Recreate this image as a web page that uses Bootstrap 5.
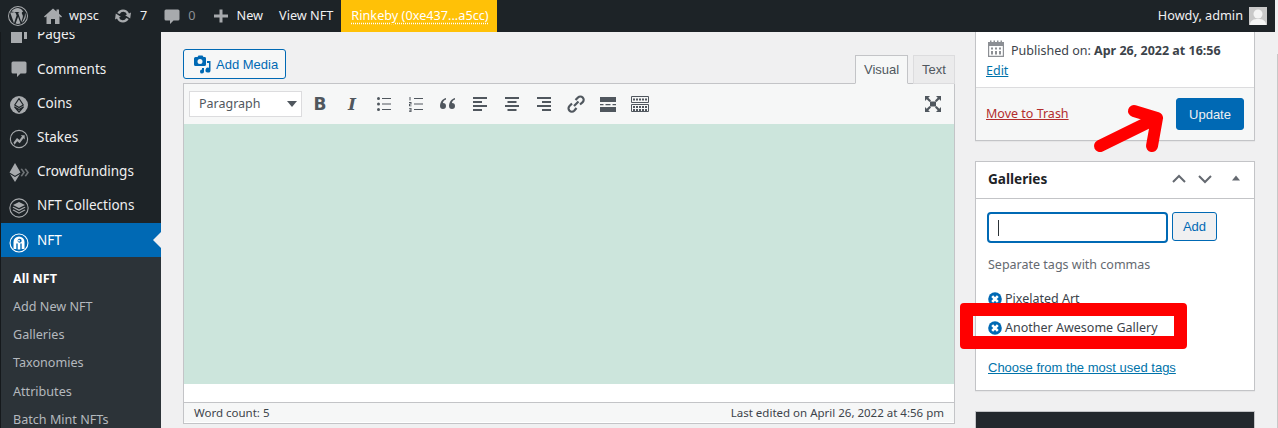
<!DOCTYPE html>
<html lang="en">
<head>
<meta charset="utf-8">
<title>Edit NFT</title>
<link href="https://cdn.jsdelivr.net/npm/bootstrap@5.3.0/dist/css/bootstrap.min.css" rel="stylesheet">
<style>
html,body{height:428px;overflow:hidden}
body{background:#f0f0f1;font-family:"Noto Sans",sans-serif;font-size:13px;color:#3c434a;position:relative}
.wp-bar{height:32px;width:1275px;background:#1d2327;color:#f0f0f1;padding:0;flex-wrap:nowrap;justify-content:flex-start;font-size:12.7px}
.wp-bar svg{display:block;fill:#a7aaad}
.bar-item{display:flex;align-items:center;height:32px;color:#f0f0f1;text-decoration:none;gap:6px;white-space:nowrap}
.bar-logo{margin-left:8px;width:20px}
.bar-home{margin-left:15px}.bar-upd{margin-left:14px;gap:7px}.bar-com{margin-left:15px}.bar-new{margin-left:17px}.bar-view{margin-left:16px}
.bar-net{margin-left:8px;width:156px;background:#ffc107;color:#fff;padding-left:10px;text-decoration:underline dotted;text-underline-offset:2px}
.bar-zero{color:#8c8f94}
.bar-howdy{margin-left:auto;margin-right:8px;gap:6px}
.bar-avatar{width:18px;height:18px;background:#c9c9c9;display:block}
.page-wrap{height:396px;overflow:hidden}
.side-menu{width:161px;border-left:1px solid #15191c;flex:none;background:#1d2327;height:396px;overflow:hidden;font-size:13.5px}
.menu-list{margin-top:-14px}
.menu-row{height:34.2px;display:flex;align-items:center;color:#f0f0f1;padding:0 0 1px;gap:0;position:relative}
.menu-row:hover{color:#f0f0f1}
.menu-ico{width:36px;display:flex;justify-content:center;flex:none}
.menu-ico svg{display:block;fill:#a7aaad}
.ico-low{margin-top:4px}
.ico-lower{margin-top:6px}
.menu-on{background:#0069b4;color:#fff}
.menu-on svg{fill:#fff}
.menu-on::after{content:"";position:absolute;right:0;top:9px;border:8px solid transparent;border-right-color:#f0f0f1;border-left:0}
.sub-list{background:#2c3338;padding:7.5px 0 0;font-size:12.6px}
.sub-row{height:28.3px;display:flex;align-items:center;padding:0 0 0 12px;color:#b4b9be}
.sub-on{color:#fff;font-weight:700}
.main-col{width:814px;flex:none;padding:17px 20px 0 22px}
.add-media{height:30px;width:103px;border:1px solid #0069b4;background:#f6f7f7;color:#0069b4;font:13px "Liberation Sans",sans-serif;padding:0 0 0 9px;display:flex;align-items:center;gap:3px;border-radius:3px}
.add-media:hover{background:#f6f7f7;color:#0069b4;border-color:#0069b4}
.head-row{height:35px;margin-bottom:-1px;align-items:flex-end}
.ed-tabs{margin-left:auto;gap:5px;align-self:flex-end}
.ed-tab{height:29px;border:1px solid #dcdcde;background:#ebebec;color:#50575e;font:13px/27px "Liberation Sans",sans-serif;padding:0 8px;width:42px;position:relative;z-index:1}
.ed-tab.tab-on{background:#f6f7f7;border-color:#c3c4c7 #c3c4c7 #f6f7f7;width:53px}
.editor-box{border:1px solid #c3c4c7;background:#fff;height:341px;width:772px;display:flex;flex-direction:column;box-sizing:border-box;border-radius:0}
.tool-row{height:40px;background:#f6f7f7;padding:0 0 0 5px;align-items:center;flex:none}
.fmt-select{width:113px;height:26px;background:#fff;border:1px solid #dcdcde;padding:0 4px 0 9px;display:flex;align-items:center;justify-content:space-between;color:#50575e;font-size:12.5px}
.fmt-caret{width:0;height:0;border:5px solid transparent;border-top:6px solid #50575e;border-bottom:0;display:block}
.tool-btn{width:32px;height:26px;display:flex;align-items:center;justify-content:center;color:#50575e}
.tool-btn svg{display:block;fill:#50575e}
.first-tool{margin-left:2px}
.glyph-b{font:700 17px "DejaVu Sans",sans-serif}
.glyph-i{font:italic 700 17px "DejaVu Serif",serif}
.tool-end{margin-left:auto;margin-right:5px}
.ed-area{height:260px;background:#cce5dc;flex:none}
.ed-blank{height:18px;background:#fff;flex:none}
.ed-status{height:20px;border-top:1px solid #c3c4c7;background:#f6f7f7;font-size:11.5px;padding:0 10px;align-items:center;justify-content:space-between;color:#3c434a;flex:none}
.side-col{width:280px;flex:none}
.edge-line{width:1px;height:374px;margin:22px 0 0 22px;background:#c8c8c8;flex:none}
.wp-box{border:1px solid #c3c4c7;border-radius:0;background:#fff;font-size:12.5px;box-shadow:0 1px 1px rgba(0,0,0,.04)}
.pub-box{height:109px;border-top:0;margin-bottom:20px}
.pub-date{height:55px;padding:7px 10px 0;line-height:20px}
.pub-date svg{vertical-align:-4px;fill:#8c8f94;margin-right:5px}
.pub-date a{color:#0073aa;display:block}
.pub-act{border-top:1px solid #dcdcde;background:#f6f7f7;height:53px;padding:0 10px;align-items:center;justify-content:space-between}
.trash-link{color:#b32d2e}
.update-btn{width:68px;height:32px;background:#0069b4;border:1px solid #0069b4;color:#f0f0f1;font:13px "Liberation Sans",sans-serif;padding:0;border-radius:3px}
.update-btn:hover{background:#0069b4;border-color:#0069b4;color:#f0f0f1}
.gal-box{height:230px;margin-bottom:20px}
.gal-head{height:37px;border-bottom:1px solid #c3c4c7;padding:0 10px 2px 12px;align-items:center;color:#1d2327;font-weight:700;font-size:13.6px;background:#fff}
.gal-ctl{margin-left:auto;gap:10px;align-items:center;display:flex}
.gal-ctl svg{display:block}
.gal-tri{margin-left:5px}
.gal-body{padding:13px 12px 0}
.tag-in{width:181px;height:31px;margin-left:-1px;border:2px solid #0069b4;border-radius:4px;padding:0 9px;box-shadow:none;font-size:13px;display:flex;align-items:center}
.tag-cursor{width:1px;height:16px;background:#2c3338;display:block}
.tag-add{width:45px;height:29px;margin-left:4px;border:1px solid #0069b4;background:#f0f0f1;color:#0069b4;font:13px "Liberation Sans",sans-serif;padding:0;border-radius:3px}
.tag-add:hover{background:#f0f0f1;color:#0069b4;border-color:#0069b4}
.tag-hint{margin:13px 0 0;color:#646970;font-size:12.5px;line-height:18px}
.tag-line{display:flex;align-items:center;gap:3px;height:20px;font-size:12.5px;line-height:20px;color:#3c434a;white-space:nowrap}
.tag-first{margin-top:15px}.tag-next{margin-top:9px}
.tag-line svg{display:block;flex:none}
.tag-more{display:block;margin-top:22px;color:#0073aa;font:13px "Liberation Sans",sans-serif}
.dark-box{height:40px;background:#23282d;border:1px solid #c3c4c7;border-radius:0}
.mark-frame{position:absolute;left:960px;top:303px;width:227px;height:46px;border:13px solid #f00;border-radius:4px;pointer-events:none}
.mark-arrow{position:absolute;left:1085px;top:95px;pointer-events:none}
</style>
</head>
<body>
<nav class="navbar wp-bar">
  <a class="bar-item bar-logo" href="#"><svg width="20" height="20" viewBox="0 0 20 20"><path fill-rule="evenodd" d="M10 0a10 10 0 1 0 0 20a10 10 0 0 0 0-20zm0 1a9 9 0 1 1 0 18a9 9 0 0 1 0-18z"/><path d="M2.200 6.600 6 17.200 8.600 9.600 7.600 6.700 6.600 6.600V6h4.600v.6l-1.100.1 3.200 9.300 1-3c.5-1.500.7-2.400.5-3.400-.2-1-1-1.700-1-2.600 0-.9.700-1.500 1.500-1.600A7.900 7.900 0 0 0 10 2.100 7.900 7.900 0 0 0 3.400 5.700h2.100v.9zM10.100 10.700 7.600 17.600a8 8 0 0 0 4.900-.1zM16.900 6.500c.3 2-.1 3.500-.6 5l-2.400 5.200a7.900 7.900 0 0 0 3-10.200z"/></svg></a>
  <a class="bar-item bar-home" href="#"><svg width="20" height="20" viewBox="0 0 20 20"><path d="M10 2.500 1 10.500l1 1 1.500-1.200V18h4.500v-5h4v5h4.500v-7.700l1.500 1.200 1-1-3-2.700V3.500h-2.500v2z"/></svg>wpsc</a>
  <a class="bar-item bar-upd" href="#"><svg width="20" height="20" viewBox="0 0 20 20"><path d="M10 3.500a6.500 6.500 0 0 1 6 4l2-.9-.8 6-5-3.300 1.700-.8a3.800 3.800 0 0 0-7.100-.4L4.300 7A6.500 6.500 0 0 1 10 3.500zM10 16.500a6.500 6.500 0 0 1-6-4l-2 .9.800-6 5 3.300-1.700.8a3.800 3.800 0 0 0 7.100.4l2.500 1.100A6.500 6.500 0 0 1 10 16.500z"/></svg>7</a>
  <a class="bar-item bar-com bar-zero" href="#"><svg width="20" height="20" viewBox="0 0 20 20"><path d="M4 3.500h12a1.500 1.500 0 0 1 1.500 1.500v8a1.500 1.500 0 0 1-1.500 1.500h-4.500L8 18v-3.500H4A1.500 1.500 0 0 1 2.500 13V5A1.500 1.500 0 0 1 4 3.500z"/></svg>0</a>
  <a class="bar-item bar-new" href="#"><svg width="18" height="20" viewBox="0 0 18 20"><path d="M7.500 3.500h3v5h5.500v3h-5.500v5h-3v-5H2v-3h5.500z"/></svg>New</a>
  <a class="bar-item bar-view" href="#">View NFT</a>
  <a class="bar-item bar-net" href="#">Rinkeby (0xe437...a5cc)</a>
  <a class="bar-item bar-howdy" href="#">Howdy, admin <span class="bar-avatar"><svg width="18" height="18" viewBox="0 0 18 18" style="fill:#f4f4f4"><circle cx="9" cy="7" r="4.500"/><path d="M1 18c0-5 4-6 8-6s8 1 8 6z"/></svg></span></a>
</nav>
<div class="d-flex page-wrap">
  <aside class="side-menu">
    <nav class="nav flex-column menu-list">
      <a class="nav-link menu-row" href="#"><span class="menu-ico"><svg width="20" height="20" viewBox="0 0 20 20"><path d="M6 2h12v12h-3V5H6zM2 6h11v12H2z"/></svg></span>Pages</a>
      <a class="nav-link menu-row" href="#"><span class="menu-ico"><svg width="20" height="20" viewBox="0 0 20 20"><path d="M4 2.500h12a1.500 1.500 0 0 1 1.500 1.500v9A1.500 1.500 0 0 1 16 14.500h-4.500L8 18v-3.500H4A1.500 1.500 0 0 1 2.500 13V4A1.500 1.500 0 0 1 4 2.500z"/></svg></span>Comments</a>
      <a class="nav-link menu-row" href="#"><span class="menu-ico ico-low"><svg width="20" height="20" viewBox="0 0 20 20"><circle cx="10" cy="10" r="9"/><path stroke="#1d2327" stroke-width="1.200" stroke-linejoin="round" d="M10 3.500l4.300 6.500L10 12.600 5.700 10zM5.700 12 10 14.600 14.300 12 10 17z"/></svg></span>Coins</a>
      <a class="nav-link menu-row" href="#"><span class="menu-ico ico-low"><svg width="20" height="20" viewBox="0 0 20 20"><path fill-rule="evenodd" d="M10 .8a9.200 9.200 0 1 0 0 18.400a9.200 9.200 0 0 0 0-18.400zm0 1.100a8.100 8.100 0 1 1 0 16.200a8.100 8.100 0 0 1 0-16.200z"/><path d="M4.500 13.500l3.500-4.500 2.500 2 2.500-3.500-1.300-1.200h4v4.200l-1.200-1.300-3.800 5-2.500-2-2.700 3.500z"/></svg></span>Stakes</a>
      <a class="nav-link menu-row" href="#"><span class="menu-ico ico-low"><svg width="20" height="20" viewBox="0 0 20 20"><path d="M6 0l5.500 9.500L6 12.700.5 9.500zM1 11 6 14l5-3-5 8z"/><path opacity=".6" d="M11.500 6l2.500 3.500-2.500 3.500 1.500.6 3-4.100-3-4zM15.500 6l2.500 3.500-2.500 3.500 1.500.6 3-4.100-3-4z"/></svg></span>Crowdfundings</a>
      <a class="nav-link menu-row" href="#"><span class="menu-ico ico-low"><svg width="20" height="20" viewBox="0 0 20 20"><path fill-rule="evenodd" d="M10 .3a9.700 9.700 0 1 0 0 19.400a9.700 9.700 0 0 0 0-19.400zm0 1.100a8.600 8.600 0 1 1 0 17.200a8.600 8.600 0 0 1 0-17.200z"/><path d="M10 4l6 3-6 3-6-3zM4.500 8.800 10 11.600l5.500-2.800 1 .7L10 12.900 3.500 9.500zM4.500 11.600 10 14.400l5.500-2.800 1 .7L10 15.700l-6.500-3.400z"/></svg></span>NFT Collections</a>
      <a class="nav-link menu-row menu-on" href="#"><span class="menu-ico ico-lower"><svg width="20" height="20" viewBox="0 0 20 20"><path fill-rule="evenodd" d="M10 .500a9.500 9.500 0 1 0 0 19a9.500 9.500 0 0 0 0-19zm0 1.100a8.400 8.400 0 1 1 0 16.800a8.400 8.400 0 0 1 0-16.800z"/><path fill-rule="evenodd" d="M10 3.500A5.500 5.500 0 0 0 4.500 9v7h2.800v-5.500h1.400V16.500h2.600V10.500h1.400V16h2.800V9A5.500 5.500 0 0 0 10 3.500zM10 5.800a2 2 0 1 1 0 3.800 2 2 0 0 1 0-3.800z"/><circle cx="10" cy="7.700" r=".9"/></svg></span>NFT</a>
    </nav>
    <nav class="nav flex-column sub-list">
      <a class="nav-link sub-row sub-on" href="#">All NFT</a>
      <a class="nav-link sub-row" href="#">Add New NFT</a>
      <a class="nav-link sub-row" href="#">Galleries</a>
      <a class="nav-link sub-row" href="#">Taxonomies</a>
      <a class="nav-link sub-row" href="#">Attributes</a>
      <a class="nav-link sub-row" href="#">Batch Mint NFTs</a>
    </nav>
  </aside>
  <main class="main-col">
    <div class="d-flex head-row">
      <button class="btn add-media align-self-start" type="button"><svg width="20" height="20" viewBox="0 0 20 20" fill="#0069b4"><path fill-rule="evenodd" d="M2.500 3h2l1-1.500h4L10.500 3h1.500A1.500 1.500 0 0 1 13 4.500v6a1.500 1.500 0 0 1-1.500 1.500h-9A1.500 1.500 0 0 1 1 10.500v-6A1.500 1.500 0 0 1 2.500 3zM7 5a2.500 2.500 0 1 0 0 5a2.500 2.500 0 0 0 0-5z"/><path d="M14 7h3.500v9a2.500 2.500 0 1 1-1.500-2.200V9h-2zM9 14h2v3.500a2 2 0 1 1-2-1.900z"/></svg>Add Media</button>
      <div class="d-flex ed-tabs">
        <div class="ed-tab tab-on">Visual</div>
        <div class="ed-tab">Text</div>
      </div>
    </div>
    <div class="editor-box">
      <div class="d-flex tool-row">
        <div class="fmt-select"><span>Paragraph</span><span class="fmt-caret"></span></div>
        <span class="tool-btn first-tool glyph-b">B</span>
        <span class="tool-btn glyph-i">I</span>
        <span class="tool-btn"><svg width="20" height="20" viewBox="0 0 20 20"><circle cx="4.500" cy="4.500" r="1.500"/><circle cx="4.500" cy="10" r="1.500"/><circle cx="4.500" cy="15.500" r="1.500"/><path d="M8 4h9v1H8zM8 9.500h9v1H8zM8 15h9v1H8z"/></svg></span>
        <span class="tool-btn"><svg width="20" height="20" viewBox="0 0 20 20"><path d="M3.500 3h1v3.500h-1zM3 8h2.500v2.500H4v1h1.500v.8H3v-2.500h1.500V9H3zM3 14h2.500v4H3v-.8h1.500v-.8H3v-.7h1.500v-.9H3zM8 4h9v1H8zM8 9.500h9v1H8zM8 15h9v1H8z"/></svg></span>
        <span class="tool-btn"><svg width="20" height="20" viewBox="0 0 20 20"><path d="M8 5.500C5.500 6.500 5 8 5 9a3 3 0 1 1-3 3c0-3.500 2-7 6-8zM17 5.500c-2.500 1-3 2.500-3 3.500a3 3 0 1 1-3 3c0-3.500 2-7 6-8z"/></svg></span>
        <span class="tool-btn"><svg width="20" height="20" viewBox="0 0 20 20"><path d="M3 3h14v2H3zM3 7h9v2H3zM3 11h14v2H3zM3 15h9v2H3z"/></svg></span>
        <span class="tool-btn"><svg width="20" height="20" viewBox="0 0 20 20"><path d="M3 3h14v2H3zM5.500 7h9v2h-9zM3 11h14v2H3zM5.500 15h9v2h-9z"/></svg></span>
        <span class="tool-btn"><svg width="20" height="20" viewBox="0 0 20 20"><path d="M3 3h14v2H3zM8 7h9v2H8zM3 11h14v2H3zM8 15h9v2H8z"/></svg></span>
        <span class="tool-btn"><svg width="20" height="20" viewBox="0 0 20 20" style="fill:none" stroke="#50575e" stroke-width="2.200"><path d="M8 12 12.500 7.500M6 9.500l-2.500 2.500a3.300 3.300 0 0 0 4.700 4.700L10.500 14M9.500 6 12 3.500A3.300 3.300 0 0 1 16.700 8.200L14 10.500"/></svg></span>
        <span class="tool-btn"><svg width="20" height="20" viewBox="0 0 20 20"><path d="M2 3h16v5H2zM2 13h16v5H2zM2 10h3.500v1.200H2zM7.500 10h5v1.200h-5zM14.500 10H18v1.200h-3.500z"/></svg></span>
        <span class="tool-btn"><svg width="20" height="20" viewBox="0 0 20 20" style="fill:none" stroke="#50575e"><path d="M1.500 2.500h17v6h-17zM1.500 10.500h17v7h-17z"/><path stroke-dasharray="2 1" stroke-width="2" d="M3 5.500h14M3 13h14M3 16h14"/></svg></span>
        <span class="tool-btn tool-end"><svg width="20" height="20" viewBox="0 0 20 20"><path d="M7 7.500h6v5H7zM2 2h5L5.300 3.700 8 6.500 6.500 8 3.700 5.300 2 7zM18 2v5l-1.700-1.700L13.500 8 12 6.500l2.700-2.800L13 2zM2 18v-5l1.700 1.700L6.500 12 8 13.500l-2.700 2.800L7 18zM18 18h-5l1.700-1.700L12 13.500l1.500-1.500 2.800 2.700L18 13z"/></svg></span>
      </div>
      <div class="ed-area"></div>
      <div class="ed-blank"></div>
      <div class="d-flex ed-status"><span>Word count: 5</span><span>Last edited on April 26, 2022 at 4:56 pm</span></div>
    </div>
  </main>
  <div class="side-col">
    <div class="card wp-box pub-box">
      <div class="pub-date"><svg width="20" height="20" viewBox="0 0 20 20"><path fill-rule="evenodd" d="M2 3h2V1.500h1.500V3h2V1.500H9V3h2V1.500h1.500V3h2V1.500H16V3h2v15H2zM3.200 7v9.800h13.600V7zM5 8.500h2v2H5zM9 8.500h2v2H9zM13 8.500h2v2h-2zM5 12h2v3.500H5zM9 12h2v3.500H9zM13 12h2v3.500h-2z"/></svg>Published on: <b>Apr 26, 2022 at 16:56</b><a href="#">Edit</a></div>
      <div class="d-flex pub-act"><a class="trash-link" href="#">Move to Trash</a><button class="btn update-btn" type="button">Update</button></div>
    </div>
    <div class="card wp-box gal-box">
      <div class="d-flex gal-head">Galleries<span class="gal-ctl"><svg width="16" height="16" viewBox="0 0 16 16" fill="none" stroke="#646970" stroke-width="2"><path d="M2 11l6-6 6 6"/></svg><svg width="16" height="16" viewBox="0 0 16 16" fill="none" stroke="#646970" stroke-width="2"><path d="M2 5l6 6 6-6"/></svg><svg class="gal-tri" width="16" height="16" viewBox="0 0 16 16" fill="#646970"><path d="M8 4.500l4 5H4z"/></svg></span></div>
      <div class="gal-body">
        <div class="d-flex"><div class="form-control tag-in"><span class="tag-cursor"></span></div><button class="btn tag-add" type="button">Add</button></div>
        <p class="tag-hint">Separate tags with commas</p>
        <div class="tag-line tag-first"><svg width="14" height="14" viewBox="0 0 14 14"><circle cx="7" cy="7" r="6.800" fill="#0069b4"/><path stroke="#fff" stroke-width="2.600" d="M4.200 4.200l5.600 5.600M9.800 4.200l-5.600 5.600"/></svg>Pixelated Art</div>
        <div class="tag-line tag-next"><svg width="14" height="14" viewBox="0 0 14 14"><circle cx="7" cy="7" r="6.800" fill="#0069b4"/><path stroke="#fff" stroke-width="2.600" d="M4.200 4.200l5.600 5.600M9.800 4.200l-5.600 5.600"/></svg>Another Awesome Gallery</div>
        <a class="tag-more" href="#">Choose from the most used tags</a>
      </div>
    </div>
    <div class="dark-box"></div>
  </div>
  <div class="edge-line"></div>
</div>
<div class="mark-frame"></div>
<svg class="mark-arrow" width="85" height="65" viewBox="0 0 85 65" fill="none" stroke="#f00" stroke-width="12" stroke-linecap="round" stroke-linejoin="round"><path d="M15 51 72 23M49 16 72 23 67 51"/></svg>
</body>
</html>
